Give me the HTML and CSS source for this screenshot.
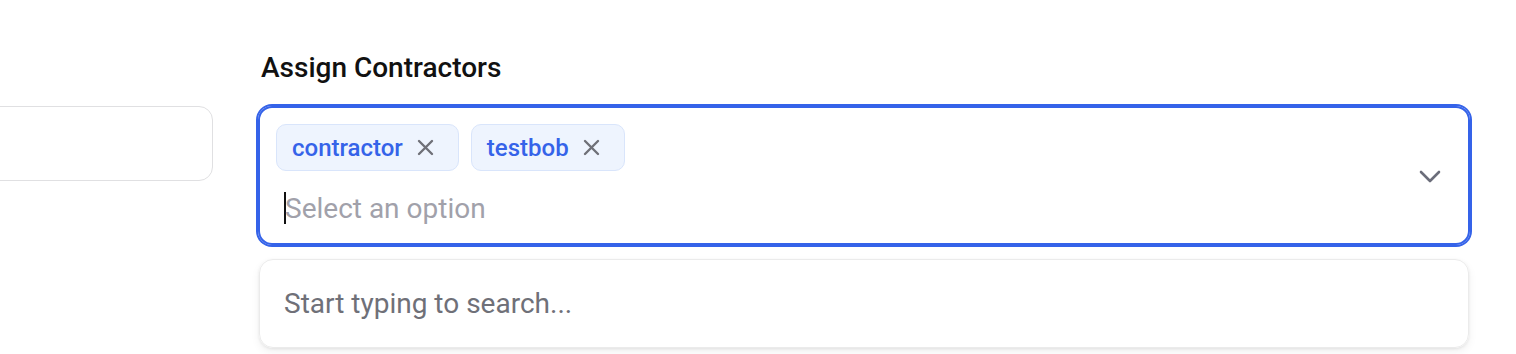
FILE: index.html
```html
<!DOCTYPE html>
<html lang="en">
<head>
<meta charset="utf-8">
<title>Assign Contractors</title>
<link rel="stylesheet" href="styles.css">
</head>
<body>
<div class="form">
  <div class="col col-left">
    <div class="label label-empty"></div>
    <div class="text-field"></div>
  </div>
  <div class="col col-right">
    <div class="label">Assign Contractors</div>
    <div class="select">
      <div class="select-body">
        <div class="chips">
          <span class="chip">contractor
            <svg class="chip-x" width="17" height="17" viewBox="0 0 17 17"><path d="M2 2 L15 15 M15 2 L2 15" stroke="#6f7078" stroke-width="2.4" stroke-linecap="round" fill="none"/></svg>
          </span>
          <span class="chip">testbob
            <svg class="chip-x" width="17" height="17" viewBox="0 0 17 17"><path d="M2 2 L15 15 M15 2 L2 15" stroke="#6f7078" stroke-width="2.4" stroke-linecap="round" fill="none"/></svg>
          </span>
        </div>
        <div class="input-row">
          <span class="caret"></span><span class="placeholder">Select an option</span>
        </div>
      </div>
      <svg class="chevron" width="22" height="13" viewBox="0 0 22 13"><path d="M2 2 L11 11 L20 2" stroke="#6b6d7a" stroke-width="2.6" stroke-linecap="round" stroke-linejoin="round" fill="none"/></svg>
    </div>
    <div class="dropdown">Start typing to search...</div>
  </div>
</div>
</body>
</html>
```
FILE: styles.css
```css
* { box-sizing: border-box; }
html, body { margin: 0; padding: 0; background: #ffffff; }
body {
  font-family: Roboto, "Liberation Sans", sans-serif;
  color: #111111;
  overflow: hidden;
  width: 1516px;
  height: 354px;
}
.form {
  display: grid;
  grid-template-columns: 253px 1212px;
  column-gap: 45px;
  margin-left: -40px;
  padding-top: 50px;
}
.col { display: flex; flex-direction: column; }
.label {
  font-size: 28px;
  font-weight: 500;
  line-height: 36px;
  height: 36px;
  margin-bottom: 20px;
  margin-left: 3px;
  color: #111111;
}
.text-field {
  height: 75px;
  border: 1.5px solid #e0e0e2;
  border-radius: 14px;
  background: #fff;
}
.select {
  position: relative;
  display: flex;
  align-items: center;
  height: 139px;
  border: 2px solid #3563e9;
  box-shadow: 0 0 0 2px #3563e9;
  border-radius: 14px;
  padding: 16px 27px 15px 16px;
}
.select-body { flex: 1; display: flex; flex-direction: column; align-self: stretch; }
.chips { display: flex; gap: 12px; }
.chip {
  display: inline-flex;
  align-items: center;
  height: 47px;
  padding: 0 24px 0 15px;
  background: #eef4fe;
  border: 1.5px solid #d9e5fb;
  border-radius: 10px;
  color: #3563e9;
  font-size: 24px;
  font-weight: 500;
}
.chip-x { margin-left: 14px; }
.input-row {
  display: flex;
  align-items: center;
  height: 40px;
  margin-top: 17px;
  margin-left: 8px;
}
.caret { width: 2px; height: 32px; background: #111; margin-right: -1px; }
.placeholder { font-size: 28px; color: #a1a1aa; }
.chevron { flex: none; }
.dropdown {
  margin: 14px 1px 0;
  height: 89px;
  border: 1px solid #ebebeb;
  border-radius: 14px;
  box-shadow: 0 4px 10px rgba(0,0,0,0.06), 0 1px 3px rgba(0,0,0,0.08);
  padding: 0 24px;
  display: flex;
  align-items: center;
  font-size: 28px;
  color: #6f7078;
}
```
